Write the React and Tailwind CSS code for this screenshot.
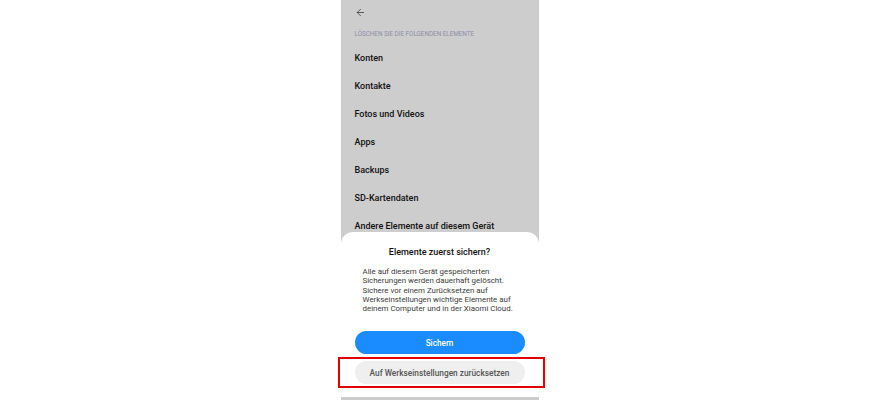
import { ArrowLeft } from "lucide-react";

const items = [
  "Konten",
  "Kontakte",
  "Fotos und Videos",
  "Apps",
  "Backups",
  "SD-Kartendaten",
  "Andere Elemente auf diesem Gerät",
];

export default function App() {
  return (
    <div className="h-[400px] w-full bg-white font-['Roboto',sans-serif]">
      <div className="mx-auto flex h-[400px] w-[198px] flex-col bg-[#cdcdcd]">
        {/* шапка */}
        <div className="flex h-[25px] items-center pl-[14px] text-[#333]">
          <ArrowLeft size={11} strokeWidth={1.6} />
        </div>
        <div className="flex h-[20px] items-center pl-[14px] text-[6.3px] text-[#8e8ea6]">
          LÖSCHEN SIE DIE FOLGENDEN ELEMENTE
        </div>
        {items.map((item) => (
          <div
            key={item}
            className="flex h-[28px] items-center pl-[14px] text-[9px] font-medium text-[#111]"
          >
            {item}
          </div>
        ))}

        {/* нижний лист */}
        <div className="relative -mt-[9px] flex h-[165px] flex-col items-center rounded-t-[12px] bg-white px-[14px]">
          <div className="mt-[14px] text-[9px] font-medium leading-[12px] text-[#111]">
            Elemente zuerst sichern?
          </div>
          <p className="mt-[9px] w-full px-[8px] text-[7.9px] leading-[9.3px] text-[#3a3a3a]">
            Alle auf diesem Gerät gespeicherten
            <br />
            Sicherungen werden dauerhaft gelöscht.
            <br />
            Sichere vor einem Zurücksetzen auf
            <br />
            Werkseinstellungen wichtige Elemente auf
            <br />
            deinem Computer und in der Xiaomi Cloud.
          </p>
          <button className="mt-[18px] flex h-[23px] w-full items-center justify-center rounded-full bg-[#1a8cff] text-[8.2px] font-medium text-white">
            Sichern
          </button>
          <div className="relative mt-[7px] w-full">
            <button className="flex h-[23px] w-full items-center justify-center rounded-full bg-[#efefef] text-[8.3px] font-medium text-[#555]">
              Auf Werkseinstellungen zurücksetzen
            </button>
            <div className="absolute -left-[17px] -right-[20px] -top-[4px] -bottom-[4px] border-2 border-[#e00000]" />
          </div>
        </div>
      </div>
    </div>
  );
}
